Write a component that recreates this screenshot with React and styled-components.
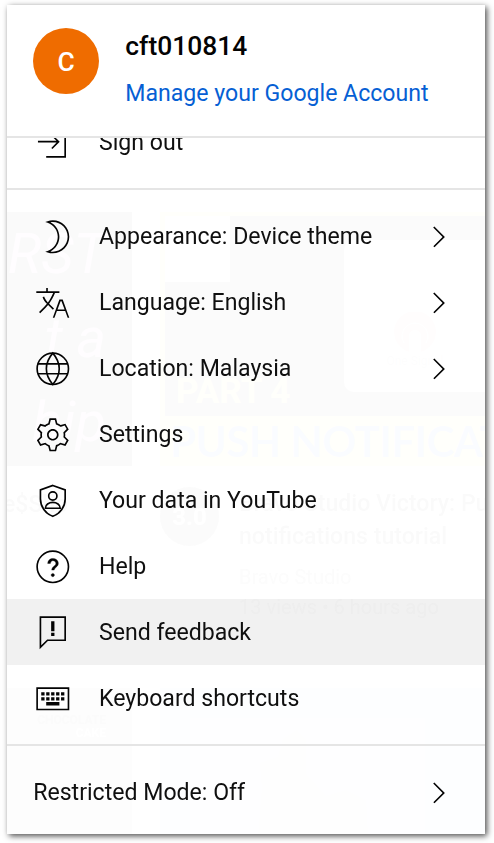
import React from "react";
import styled, { createGlobalStyle } from "styled-components";

const GlobalStyle = createGlobalStyle`
    * {
        box-sizing: border-box;
    }
    body {
        margin: 0;
        background: #fff;
        font-family: Roboto, "Liberation Sans", sans-serif;
    }
`;

const icons = {
    signOut: (
        <path d="M20 3v18H8v-1h11V4H8V3h12zm-8.9 12.1.7.7 4.4-4.4L11.8 7l-.7.7 3.1 3.1H3v1h11.3l-3.2 3.3z" />
    ),
    moon: (
        <path d="M12 22c-1.07 0-2.13-.17-3.16-.52l-1.42-.47 1.42-.47C12.53 19.31 15 15.88 15 12s-2.47-7.31-6.16-8.53l-1.42-.48 1.42-.47C9.87 2.17 10.93 2 12 2c5.51 0 10 4.49 10 10s-4.49 10-10 10zm-1.42-1.11c.47.07.95.11 1.42.11 4.96 0 9-4.04 9-9s-4.04-9-9-9c-.47 0-.95.04-1.42.11C13.88 4.81 16 8.21 16 12s-2.12 7.19-5.42 8.89z" />
    ),
    language: (
        <path d="M13.33 6c-1 2.42-2.22 4.65-3.57 6.52l2.98 2.94-.7.71-2.88-2.84c-.53.67-1.06 1.28-1.61 1.83l-3.19 3.19-.71-.71 3.19-3.19c.55-.55 1.08-1.16 1.6-1.83l-.16-.15c-1.11-1.09-1.97-2.44-2.49-3.9l.94-.34c.47 1.32 1.25 2.54 2.25 3.53l.05.05c1.2-1.68 2.29-3.66 3.2-5.81H2V5h6V3h1v2h7v1h-2.67zM22 21h-1l-1.49-4h-5.02L13 21h-1l4-11h2l4 11zm-2.86-5-1.86-5h-.56l-1.86 5h4.28z" />
    ),
    globe: (
        <g fill="none" stroke="currentColor">
            <circle cx="12" cy="12" r="9.5" />
            <path d="M12 2.5C9.5 5.4 8.1 8.6 8.1 12s1.4 6.6 3.9 9.5c2.5-2.9 3.9-6.1 3.9-9.5S14.5 5.4 12 2.5zM3 9h18M3 15h18" />
        </g>
    ),
    gear: (
        <path d="M12 9.5c1.38 0 2.5 1.12 2.5 2.5s-1.12 2.5-2.5 2.5-2.5-1.12-2.5-2.5 1.12-2.5 2.5-2.5m0-1c-1.93 0-3.5 1.57-3.5 3.5s1.57 3.5 3.5 3.5 3.5-1.57 3.5-3.5-1.57-3.5-3.5-3.5zM13.22 3l.55 2.2.13.51.5.18c.61.23 1.19.56 1.72.98l.4.32.5-.14 2.17-.62 1.22 2.11-1.63 1.59-.37.36.08.51c.05.32.08.64.08.98s-.03.66-.08.98l-.08.51.37.36 1.63 1.59-1.22 2.11-2.17-.62-.5-.14-.4.32c-.53.43-1.11.76-1.72.98l-.5.18-.13.51-.55 2.24h-2.44l-.55-2.2-.13-.51-.5-.18c-.6-.23-1.18-.56-1.72-.99l-.4-.32-.5.14-2.17.62-1.21-2.12 1.63-1.59.37-.36-.08-.51c-.05-.32-.08-.65-.08-.98s.03-.66.08-.98l.08-.51-.37-.36L3.6 8.56l1.22-2.11 2.17.62.5.14.4-.32c.53-.44 1.11-.77 1.72-.99l.5-.18.13-.51.54-2.21h2.44M14 2h-4l-.74 2.96c-.73.27-1.4.66-2 1.14l-2.92-.83-2 3.46 2.19 2.13c-.06.37-.09.75-.09 1.14s.03.77.09 1.14l-2.19 2.13 2 3.46 2.92-.83c.6.48 1.27.87 2 1.14L10 22h4l.74-2.96c.73-.27 1.4-.66 2-1.14l2.92.83 2-3.46-2.19-2.13c.06-.37.09-.75.09-1.14s-.03-.77-.09-1.14l2.19-2.13-2-3.46-2.92.83c-.6-.48-1.27-.87-2-1.14L14 2z" />
    ),
    shield: (
        <g fill="none" stroke="currentColor">
            <path d="M12 2.7l7.5 2.7v5.5c0 4.6-3 8.9-7.5 10.5-4.5-1.6-7.5-5.9-7.5-10.5V5.4z" />
            <circle cx="12" cy="9.1" r="2.5" />
            <path d="M7.5 16.5c0-2.1 2.1-3.5 4.5-3.5s4.5 1.4 4.5 3.5z" />
        </g>
    ),
    help: (
        <>
            <circle cx="12" cy="12" r="9.5" fill="none" stroke="currentColor" />
            <path d="M15.36 9.96c0 1.09-.67 1.67-1.31 2.24-.53.47-1.03.9-1.16 1.6l-.04.2h-1.52l.03-.28c.14-1.17.8-1.76 1.47-2.27.52-.4 1.01-.77 1.01-1.49 0-.51-.23-.97-.63-1.29-.4-.31-.92-.42-1.42-.29-.59.15-1.05.67-1.19 1.34l-.05.28H8.9l.05-.42c.14-1.25 1.11-2.26 2.4-2.57.96-.25 2.03-.04 2.8.56.78.6 1.21 1.44 1.21 2.39zM12 18c.55 0 1-.45 1-1s-.45-1-1-1-1 .45-1 1 .45 1 1 1z" stroke="currentColor" strokeWidth=".2" />
        </>
    ),
    feedback: (
        <path d="M13 14h-2v-2h2v2zm0-9h-2v6h2V5zm6-2H5v16.59l3.29-3.29.3-.3H19V3m1-1v15H9l-5 5V2h16z" />
    ),
    keyboard: (
        <path d="M21 6v12H3V6h18m1-1H2v14h20V5zM5 8h2v2H5zm3 0h2v2H8zm3 0h2v2h-2zm3 0h2v2h-2zm3 0h2v2h-2zM5 11h2v2H5zm3 0h2v2H8zm3 0h2v2h-2zm3 0h2v2h-2zm3 0h2v2h-2zM8 14h8v2H8z" />
    ),
    chevron: (
        <path d="m9.4 18.4-.7-.7 5.6-5.6-5.7-5.7.7-.7 6.4 6.4-6.3 6.3z" />
    ),
};

const Icon = ({ name }) => <Svg viewBox="0 0 24 24">{icons[name]}</Svg>;

const menu = [
    { icon: "moon", label: "Appearance: Device theme", more: true },
    { icon: "language", label: "Language: English", more: true },
    { icon: "globe", label: "Location: Malaysia", more: true },
    { icon: "gear", label: "Settings" },
    { icon: "shield", label: "Your data in YouTube" },
    { icon: "help", label: "Help" },
    { icon: "feedback", label: "Send feedback", active: true },
    { icon: "keyboard", label: "Keyboard shortcuts" },
];

const MenuRow = ({ icon, label, more, active }) => (
    <Row $active={active}>
        {icon && <Icon name={icon} />}
        <Label>{label}</Label>
        {more && <Icon name="chevron" />}
    </Row>
);

// faint video grid that shows through the translucent menu
const VideoGrid = () => (
    <Backdrop aria-hidden="true">
        <SideColumn>
            <DarkThumb>
                <Script>RST</Script>
                <Script>t a</Script>
                <Script>hip</Script>
            </DarkThumb>
            <SideTitle>e$Sho</SideTitle>
            <DarkThumb $soft>
                <Cake>CHOCOLATE</Cake>
                <Cake $light>CAKE</Cake>
            </DarkThumb>
        </SideColumn>
        <MainColumn>
            <Poster>
                <PosterTop>
                    <PosterLeft>
                        <WhiteBox />
                        <Part>PART 4</Part>
                    </PosterLeft>
                    <SignalCard>
                        <SignalLogo>
                            <svg width="46" height="42" viewBox="0 0 46 42">
                                <path
                                    d="M17 40V24a6 6 0 1 1 12 0v16a21 21 0 1 0-12 0z"
                                    fill="#e99"
                                />
                                <path
                                    d="M12 31a13 13 0 1 1 22 0"
                                    fill="none"
                                    stroke="#fff"
                                />
                            </svg>
                            One Signal
                        </SignalLogo>
                    </SignalCard>
                </PosterTop>
                <Push>PUSH NOTIFICATION</Push>
            </Poster>
            <Details>
                <Channel>3.0</Channel>
                <div>
                    <VideoTitle>Bravo Studio Victory: Push</VideoTitle>
                    <VideoTitle>notifications tutorial</VideoTitle>
                    <Meta>Bravo Studio</Meta>
                    <Meta>13 views • 6 hours ago</Meta>
                </div>
            </Details>
            <BlueThumb>
                <svg width="330" height="150" viewBox="0 0 330 150">
                    <path d="M30 30h235v120H30z" fill="#fff" opacity=".4" />
                    <path
                        d="M98 150l4-50-2-25 18-6 5-18 14-9 9 10v34l20 22 20-6 20 10 2 38z"
                        fill="#b59c90"
                        opacity=".6"
                    />
                </svg>
            </BlueThumb>
        </MainColumn>
    </Backdrop>
);

const App = () => (
    <Page>
        <GlobalStyle />
        <Panel>
            <VideoGrid />
            <Header>
                <Avatar>C</Avatar>
                <div>
                    <Name>cft010814</Name>
                    <Manage>Manage your Google Account</Manage>
                </div>
            </Header>
            <ClippedSection>
                <MenuRow icon="signOut" label="Sign out" />
            </ClippedSection>
            <Section>
                {menu.map((item) => (
                    <MenuRow key={item.label} {...item} />
                ))}
            </Section>
            <Section>
                <MenuRow label="Restricted Mode: Off" more />
            </Section>
        </Panel>
    </Page>
);

const Page = styled.div`
    width: 494px;
    height: 843px;
    padding: 5px 0 0 7px;
    overflow: hidden;
    background: #fff;
`;

const Panel = styled.div`
    position: relative;
    isolation: isolate;
    width: 478px;
    height: 829px;
    display: flex;
    flex-direction: column;
    overflow: hidden;
    background: #fff;
    color: #0f0f0f;
    box-shadow: 2px 2px 6px rgba(0, 0, 0, 0.7);
`;

const Header = styled.div`
    flex: none;
    display: flex;
    gap: 26.3px;
    height: 131px;
    padding: 23px 26px 0;
    background: #fff;
`;

const Avatar = styled.div`
    display: flex;
    align-items: center;
    justify-content: center;
    width: 66px;
    height: 66px;
    padding-top: 2px;
    border-radius: 50%;
    background: #ef6c00;
    color: #fff;
    font-size: 26.4px;
    font-weight: 500;
`;

const Name = styled.div`
    font-size: 26.4px;
    line-height: 36px;
    font-weight: 500;
    color: #030303;
`;

const Manage = styled.div`
    margin-top: 12px;
    font-size: 23.1px;
    line-height: 36px;
    color: #065fd4;
    white-space: nowrap;
`;

const Section = styled.div`
    flex: none;
    padding: 13px 0;
    border-top: 2px solid #e5e5e5;
`;

const ClippedSection = styled.div`
    flex: none;
    display: flex;
    flex-direction: column;
    justify-content: flex-end;
    height: 52px;
    padding-bottom: 13px;
    overflow: hidden;
    border-top: 2px solid #e5e5e5;
`;

const Row = styled.div`
    flex: none;
    display: flex;
    align-items: center;
    height: 66px;
    padding: 0 26.4px 0 25.6px;
    background: ${(props) => (props.$active ? "rgba(0, 0, 0, 0.055)" : "none")};
`;

const Label = styled.span`
    flex: 1;
    font-size: 23.1px;
    line-height: 33px;
    white-space: nowrap;

    &:first-child {
        margin-left: 0.6px;
    }

    svg + & {
        margin-left: 26.8px;
    }
`;

const Svg = styled.svg`
    flex: none;
    width: 39.6px;
    height: 39.6px;
    margin-top: 0.8px;
    fill: currentColor;
    color: #030303;
`;

const Backdrop = styled.div`
    position: absolute;
    inset: 0;
    z-index: -1;
    display: flex;
    gap: 28px;
    padding-top: 207px;
    overflow: hidden;
    opacity: 0.022;
`;

const SideColumn = styled.div`
    flex: none;
    width: 125px;
`;

const DarkThumb = styled.div`
    height: 254px;
    padding: ${(props) => (props.$soft ? "26px" : "0")} 26px 0 0;
    overflow: hidden;
    background: ${(props) => (props.$soft ? "#888" : "#222")};
    text-align: right;
`;

const Script = styled.div`
    color: #e9a8e9;
    font-size: 56px;
    font-style: italic;
    font-weight: 400;
    line-height: 84px;
    white-space: nowrap;
`;

const SideTitle = styled.div`
    height: 222px;
    padding-top: 22px;
    margin-left: -4px;
    font-size: 23px;
    line-height: 33px;
    font-weight: 500;
`;

const Cake = styled.div`
    color: ${(props) => (props.$light ? "#fff" : "#333")};
    font-size: 12px;
    font-weight: 700;
    line-height: 13px;
`;

const MainColumn = styled.div`
    flex: none;
    width: 452px;
`;

const Poster = styled.div`
    height: 254px;
    padding: 4px 0 0 5px;
    overflow: hidden;
    background: #fff23c;
`;

const PosterTop = styled.div`
    display: flex;
    justify-content: space-between;
    height: 200px;
    background: #444;
`;

const PosterLeft = styled.div`
    display: flex;
    flex-direction: column;
    justify-content: space-between;
`;

const WhiteBox = styled.div`
    width: 65px;
    height: 66px;
    background: #fff;
`;

const Part = styled.div`
    padding: 0 0 3px 11px;
    color: #fff23c;
    font-size: 35px;
    line-height: 42px;
    font-weight: 700;
`;

const SignalCard = styled.div`
    width: 268px;
    height: 152px;
    margin-top: 24px;
    padding: 64px 0 0 36px;
    border-radius: 10px;
    background: #fff;
`;

const SignalLogo = styled.div`
    display: flex;
    flex-direction: column;
    align-items: center;
    width: 70px;
    height: 70px;
    padding-top: 7px;
    border: 1px solid #ddd;
    border-radius: 10px;
    color: #999;
    font-size: 12px;
    white-space: nowrap;
`;

const Push = styled.div`
    padding-left: 5px;
    color: #2a62ee;
    font-family: Lato, sans-serif;
    font-size: 42px;
    font-weight: 700;
    line-height: 50px;
    letter-spacing: -0.5px;
    white-space: nowrap;
`;

const Details = styled.div`
    display: flex;
    gap: 20px;
    height: 222px;
    padding-top: 21px;
`;

const Channel = styled.div`
    display: flex;
    align-items: center;
    justify-content: center;
    width: 59px;
    height: 59px;
    border-radius: 50%;
    background: #444;
    color: #fff;
    font-size: 24px;
    font-weight: 700;
`;

const VideoTitle = styled.div`
    color: #0f0f0f;
    font-size: 23.1px;
    font-weight: 500;
    line-height: 33px;
    white-space: nowrap;
`;

const Meta = styled.div`
    color: #606060;
    font-size: 20px;
    line-height: 30px;

    ${VideoTitle} + & {
        margin-top: 9px;
    }
`;

const BlueThumb = styled.div`
    height: 150px;
    background: #8fb0dc;
`;

export default App;
